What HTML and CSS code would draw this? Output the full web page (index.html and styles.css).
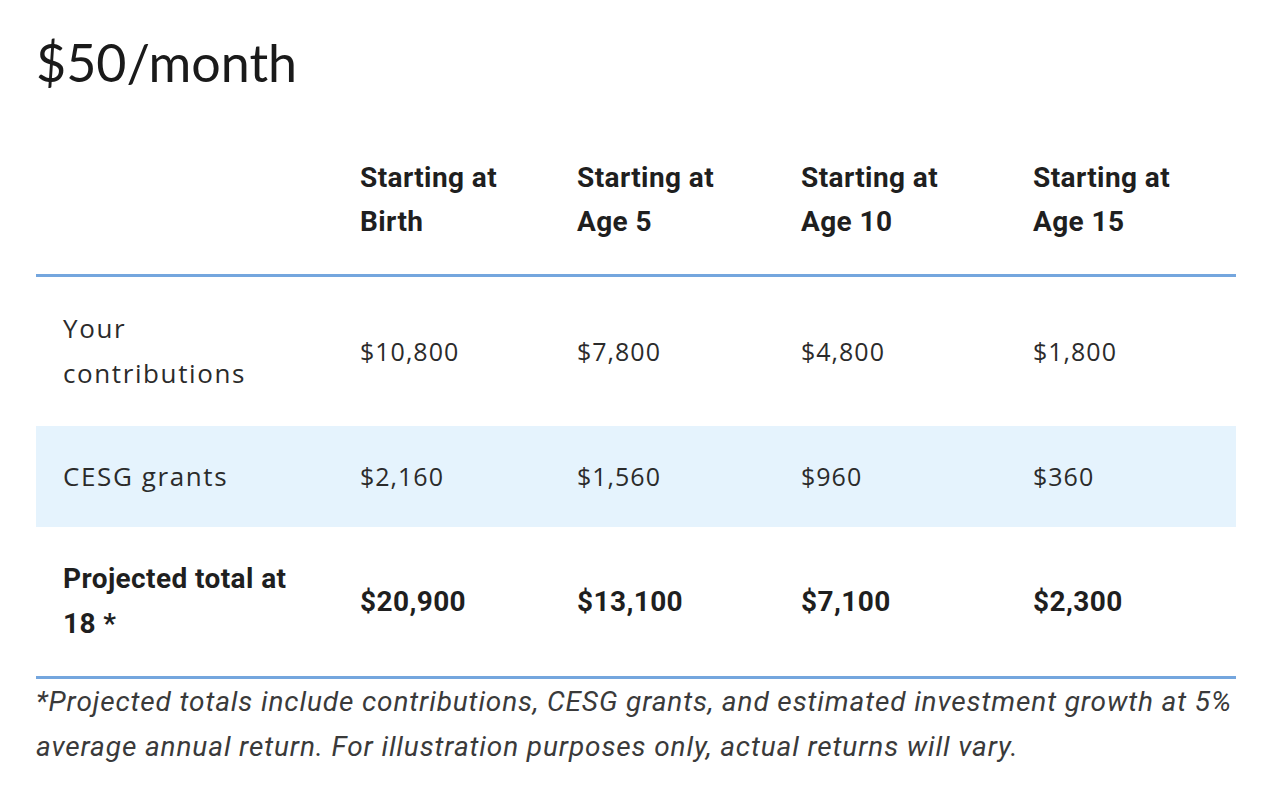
FILE: index.html
```html
<!DOCTYPE html>
<html>
<head>
<meta charset="utf-8">
<link rel="stylesheet" href="styles.css">
</head>
<body>
<div class="page">
  <h2 class="title">$50/month</h2>
  <table class="proj">
    <colgroup>
      <col class="c1"><col class="c2"><col class="c3"><col class="c4"><col class="c5">
    </colgroup>
    <thead>
      <tr>
        <th class="label"></th>
        <th>Starting at<br>Birth</th>
        <th>Starting at<br>Age 5</th>
        <th>Starting at<br>Age 10</th>
        <th>Starting at<br>Age 15</th>
      </tr>
    </thead>
    <tbody>
      <tr>
        <td class="label">Your<br>contributions</td>
        <td>$10,800</td>
        <td>$7,800</td>
        <td>$4,800</td>
        <td>$1,800</td>
      </tr>
      <tr class="alt">
        <td class="label">CESG grants</td>
        <td>$2,160</td>
        <td>$1,560</td>
        <td>$960</td>
        <td>$360</td>
      </tr>
      <tr class="total">
        <td class="label">Projected total at<br>18 *</td>
        <td>$20,900</td>
        <td>$13,100</td>
        <td>$7,100</td>
        <td>$2,300</td>
      </tr>
    </tbody>
  </table>
  <p class="note">*Projected totals include contributions, CESG grants, and estimated investment growth at 5% average annual return. For illustration purposes only, actual returns will vary.</p>
</div>
</body>
</html>
```
FILE: styles.css
```css
html, body {
  margin: 0;
  padding: 0;
  background: #fff;
}
.page {
  padding: 24px 40px 0 36px;
  width: 1200px;
}
.title {
  font-family: Lato, "Liberation Sans", sans-serif;
  font-weight: 400;
  font-size: 52px;
  line-height: 76px;
  color: #1a1a1a;
  margin: 0 0 56px 0;
}
.proj {
  width: 1200px;
  table-layout: fixed;
  border-collapse: collapse;
  border-bottom: 3px solid #74a6de;
}
.c1 { width: 324px; }
.c2 { width: 217px; }
.c3 { width: 224px; }
.c4 { width: 232px; }
.c5 { width: 203px; }
.proj th {
  font-family: Roboto, "Liberation Sans", sans-serif;
  font-weight: 700;
  font-size: 28px;
  letter-spacing: 0.4px;
  line-height: 44px;
  color: #1f1f1f;
  text-align: left;
  vertical-align: top;
  padding: 0 0 30px 0;
  border-bottom: 3px solid #74a6de;
}
.proj td {
  font-family: "Open Sans", Lato, "Liberation Sans", sans-serif;
  font-size: 25px;
  letter-spacing: 1px;
  line-height: 45px;
  color: #2b2b2b;
  text-align: left;
  vertical-align: middle;
  padding: 29px 0 30px 0;
}
.proj td.label {
  font-size: 26px;
  letter-spacing: 1.6px;
  padding-left: 27px;
}
.proj tr.alt td {
  background: #e5f3fd;
  padding-top: 28px;
  padding-bottom: 28px;
}
.proj tr.total td {
  font-family: Roboto, "Liberation Sans", sans-serif;
  font-weight: 700;
  font-size: 28px;
  letter-spacing: 0.4px;
  color: #1f1f1f;
}
.note {
  font-family: Roboto, "Liberation Sans", sans-serif;
  font-style: italic;
  font-size: 28px;
  letter-spacing: 0.88px;
  line-height: 45px;
  color: #3a3a3a;
  margin: 0;
  width: 1200px;
}
```
